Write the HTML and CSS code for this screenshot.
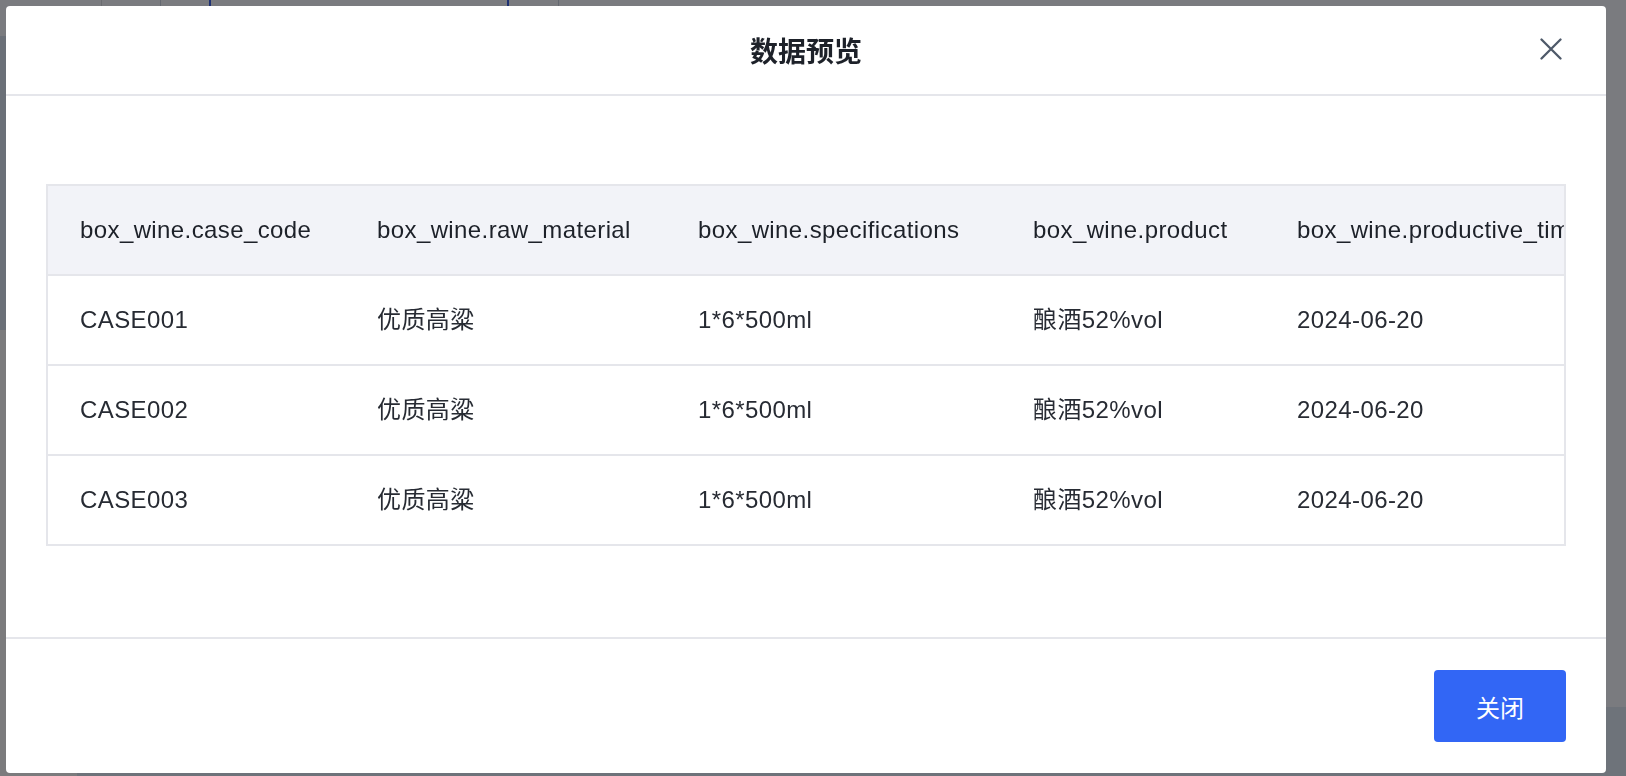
FILE: index.html
```html
<!DOCTYPE html>
<html lang="zh-CN">
<head>
<meta charset="utf-8">
<title>数据预览</title>
<link rel="stylesheet" href="styles.css">
</head>
<body>
<div class="page">
  <div class="page-top">
    <div class="seg seg-a"></div>
    <div class="seg seg-b"></div>
    <div class="seg seg-c"></div>
    <div class="seg seg-d"></div>
    <div class="seg seg-e"></div>
  </div>
  <div class="page-body">
    <div class="side"><div class="side-active"></div></div>
    <div class="main"><div class="card"></div></div>
  </div>
</div>
<div class="mask"></div>
<div class="modal">
  <div class="modal-header">
    <span class="modal-spacer"></span>
    <h2 class="modal-title">数据预览</h2>
    <button class="modal-close" aria-label="关闭">
      <svg width="22" height="22" viewBox="0 0 22 22"><path d="M1.5 1.5 L20.5 20.5 M20.5 1.5 L1.5 20.5" stroke="#4e5969" stroke-width="2.3" stroke-linecap="round" fill="none"/></svg>
    </button>
  </div>
  <div class="modal-body">
    <div class="table-wrap">
      <table class="preview-table">
        <colgroup>
          <col class="col-1"><col class="col-2"><col class="col-3"><col class="col-4"><col class="col-5">
        </colgroup>
        <thead>
          <tr>
            <th>box_wine.case_code</th>
            <th>box_wine.raw_material</th>
            <th>box_wine.specifications</th>
            <th>box_wine.product</th>
            <th>box_wine.productive_time</th>
          </tr>
        </thead>
        <tbody>
          <tr>
            <td>CASE001</td><td>优质高粱</td><td>1*6*500ml</td><td>酿酒52%vol</td><td>2024-06-20</td>
          </tr>
          <tr>
            <td>CASE002</td><td>优质高粱</td><td>1*6*500ml</td><td>酿酒52%vol</td><td>2024-06-20</td>
          </tr>
          <tr>
            <td>CASE003</td><td>优质高粱</td><td>1*6*500ml</td><td>酿酒52%vol</td><td>2024-06-20</td>
          </tr>
        </tbody>
      </table>
    </div>
  </div>
  <div class="modal-footer">
    <button class="btn-primary">关闭</button>
  </div>
</div>
</body>
</html>
```

FILE: styles.css
```css
html, body {
  margin: 0;
  padding: 0;
  height: 100%;
  overflow: hidden;
}
body {
  font-family: "Liberation Sans", "Noto Sans CJK SC", sans-serif;
  background: #dde6f4;
}

/* page behind the dialog */
.page {
  display: flex;
  flex-direction: column;
  height: 100vh;
}
.page-top {
  height: 36px;
  display: flex;
  background: #f4f6fe;
}
.seg {
  height: 100%;
  box-sizing: border-box;
}
.seg-a { width: 102px; border-right: 1px solid #d4d8e0; }
.seg-b { width: 59px; border-right: 1px solid #c8d0e0; }
.seg-c { width: 50px; border-right: 2px solid #3d62e6; }
.seg-d { width: 298px; border-right: 2px solid #3d62e6; }
.seg-e { width: 50px; border-right: 1px solid #c8d0e0; }
.page-body {
  flex: 1;
  display: flex;
}
.side {
  width: 77px;
  background: #f6f7fb;
}
.side-active {
  height: 294px;
  background: #d6e0f0;
}
.main {
  flex: 1;
  padding-left: 20px;
}
.card {
  height: 671px;
  background: #f4f6fe;
}
.mask {
  position: fixed;
  inset: 0;
  background: rgba(0, 0, 0, 0.5);
}

/* dialog */
.modal {
  position: fixed;
  left: 6px;
  top: 6px;
  width: 1600px;
  height: 767px;
  background: #ffffff;
  border-radius: 4px;
  display: flex;
  flex-direction: column;
  overflow: hidden;
}
.modal-header {
  height: 88px;
  flex: none;
  display: grid;
  grid-template-columns: 1fr auto 1fr;
  align-items: center;
  padding: 0 44px;
  border-bottom: 2px solid #e5e6eb;
}
.modal-title {
  margin: 0;
  font-family: "Noto Sans CJK SC", sans-serif;
  font-size: 28px;
  font-weight: 700;
  color: #1d2129;
  line-height: 1;
}
.modal-close {
  justify-self: end;
  border: 0;
  background: transparent;
  padding: 0;
  width: 22px;
  height: 22px;
  margin-top: -2px;
  display: flex;
  cursor: pointer;
}
.modal-body {
  flex: 1;
  min-height: 0;
  padding: 88px 40px;
  overflow: hidden;
}
.table-wrap {
  border: 2px solid #e5e6eb;
  overflow: hidden;
}
.preview-table {
  table-layout: fixed;
  width: 1577px;
  border-collapse: separate;
  border-spacing: 0;
  font-size: 24px;
  line-height: 30px;
  letter-spacing: 0.4px;
}
.col-1 { width: 297px; }
.col-2 { width: 321px; }
.col-3 { width: 335px; }
.col-4 { width: 264px; }
.col-5 { width: 360px; }
.preview-table tr {
  height: 90px;
}
.preview-table th,
.preview-table td {
  padding: 0 0 0 32px;
  text-align: left;
  white-space: nowrap;
  overflow: hidden;
  border-bottom: 2px solid #e5e6eb;
}
.preview-table th {
  background: #f2f3f8;
  font-weight: 400;
  color: #1d2129;
}
.preview-table td {
  color: #272b33;
}
.preview-table tbody tr:last-child {
  height: 88px;
}
.preview-table tbody tr:last-child td {
  border-bottom: 0;
}
.modal-footer {
  flex: none;
  height: 136px;
  box-sizing: border-box;
  padding: 32px 40px;
  border-top: 2px solid #e5e6eb;
  display: flex;
  justify-content: flex-end;
  align-items: center;
}
.btn-primary {
  width: 132px;
  height: 72px;
  border: 0;
  border-radius: 4px;
  background: #3266f5;
  color: #ffffff;
  font-family: "Noto Sans CJK SC", sans-serif;
  font-size: 24px;
  cursor: pointer;
}
```
